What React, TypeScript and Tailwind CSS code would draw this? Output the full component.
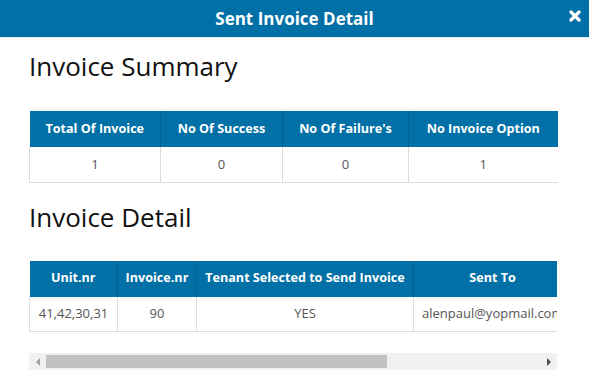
import React from "react";

const headBg = "bg-[#0070a6]";

export default function App() {
  return (
    <div className="w-[589px] h-[375px] bg-white overflow-hidden" style={{ fontFamily: '"Open Sans", sans-serif' }}>
      <div className={`relative h-[38px] ${headBg} border-b border-[#e5e5e5] flex items-center justify-center`}>
        <span className="text-white font-bold text-[17px] leading-none">Sent Invoice Detail</span>
        <svg className="absolute left-[569px] top-[10px]" width="12" height="12" viewBox="0 0 12 12">
          <path d="M2 2 L10 10 M10 2 L2 10" stroke="white" strokeWidth="3.2" strokeLinecap="round" />
        </svg>
      </div>
      <div className="pl-[29px] pr-[32px]">
        <h2 className="mt-[12px] text-[26px] leading-[32px] text-[#111]">Invoice Summary</h2>
        <table className="mt-[29px] w-[528px] border-collapse table-fixed">
          <colgroup>
            <col className="w-[131px]" />
            <col className="w-[122px]" />
            <col className="w-[126px]" />
            <col className="w-[149px]" />
          </colgroup>
          <thead>
            <tr className={`${headBg} text-white h-[36px] text-[12.6px]`}>
              {["Total Of Invoice", "No Of Success", "No Of Failure's", "No Invoice Option"].map((h, i) => (
                <th key={h} className={`font-bold text-center ${i > 0 ? "border-l border-[#00608f]" : ""}`}>{h}</th>
              ))}
            </tr>
          </thead>
          <tbody>
            <tr className="h-[35px] text-[13px] text-[#555] border-b border-[#dddddd]">
              {["1", "0", "0", "1"].map((v, i) => (
                <td key={i} className="text-center border-l border-[#dddddd]">{v}</td>
              ))}
            </tr>
          </tbody>
        </table>
        <h2 className="mt-[18px] text-[26px] leading-[32px] text-[#111]">Invoice Detail</h2>
        <div className="mt-[28px] w-[528px] overflow-hidden">
          <table className="w-[686px] border-collapse table-fixed">
            <colgroup>
              <col className="w-[88px]" />
              <col className="w-[79px]" />
              <col className="w-[217px]" />
              <col className="w-[158px]" />
              <col className="w-[144px]" />
            </colgroup>
            <thead>
              <tr className={`${headBg} text-white h-[36px] text-[12.6px]`}>
                {["Unit.nr", "Invoice.nr", "Tenant Selected to Send Invoice", "Sent To", "Status"].map((h, i) => (
                  <th key={h} className={`font-bold text-center whitespace-nowrap ${i > 0 ? "border-l border-[#00608f]" : ""}`}>{h}</th>
                ))}
              </tr>
            </thead>
            <tbody>
              <tr className="h-[35px] text-[13px] text-[#555] border-b border-[#dddddd]">
                <td className="text-center border-l border-[#dddddd]">41,42,30,31</td>
                <td className="text-center border-l border-[#dddddd]">90</td>
                <td className="text-center border-l border-[#dddddd]">YES</td>
                <td className="text-left pl-[8px] border-l border-[#dddddd] whitespace-nowrap overflow-hidden">alenpaul@yopmail.com</td>
                <td className="text-center border-l border-[#dddddd]">Sent</td>
              </tr>
            </tbody>
          </table>
        </div>
        <div className="mt-[21px] w-[528px] h-[17px] bg-[#f1f1f1] flex items-center">
          <div className="w-[17px] h-full flex items-center justify-center">
            <div className="w-0 h-0 border-y-[4px] border-y-transparent border-r-[4px] border-r-[#a3a3a3]" />
          </div>
          <div className="w-[341px] h-[13px] bg-[#c1c1c1]" />
          <div className="flex-1" />
          <div className="w-[17px] h-full flex items-center justify-center">
            <div className="w-0 h-0 border-y-[4px] border-y-transparent border-l-[4px] border-l-[#505050]" />
          </div>
        </div>
      </div>
    </div>
  );
}
